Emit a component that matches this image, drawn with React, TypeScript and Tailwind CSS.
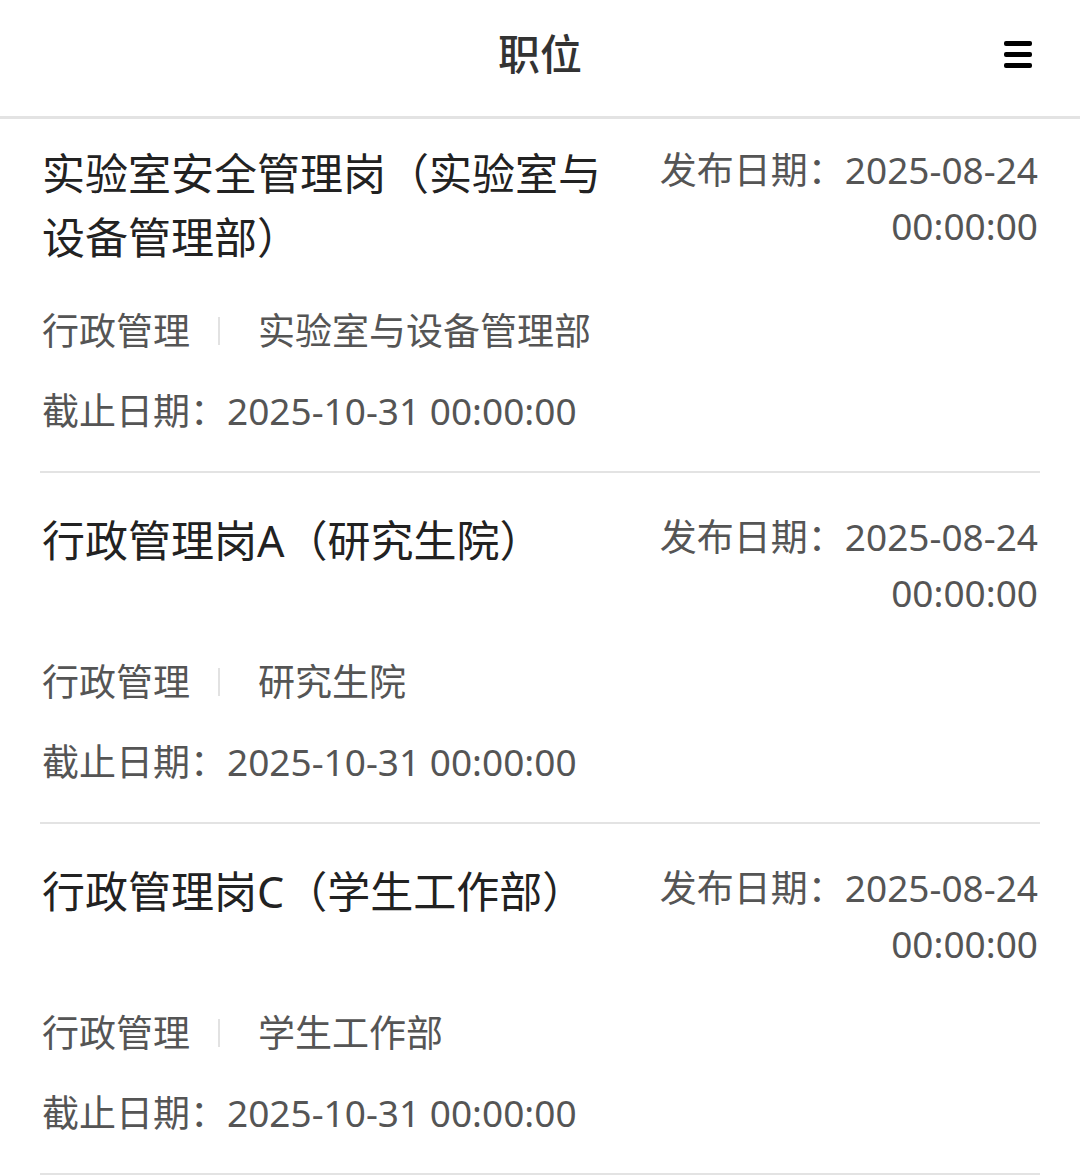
import React from 'react';

interface Job {
  title: string;
  category: string;
  dept: string;
  publishDate: string;
  publishTime: string;
  deadline: string;
}

const jobs: Job[] = [
  {
    title: '实验室安全管理岗（实验室与设备管理部）',
    category: '行政管理',
    dept: '实验室与设备管理部',
    publishDate: '2025-08-24',
    publishTime: '00:00:00',
    deadline: '2025-10-31 00:00:00',
  },
  {
    title: '行政管理岗A（研究生院）',
    category: '行政管理',
    dept: '研究生院',
    publishDate: '2025-08-24',
    publishTime: '00:00:00',
    deadline: '2025-10-31 00:00:00',
  },
  {
    title: '行政管理岗C（学生工作部）',
    category: '行政管理',
    dept: '学生工作部',
    publishDate: '2025-08-24',
    publishTime: '00:00:00',
    deadline: '2025-10-31 00:00:00',
  },
];

function JobCard({ job, first }: { job: Job; first: boolean }) {
  return (
    <div className={first ? 'pt-[23px]' : 'pt-[36px]'}>
      <div className="flex items-start justify-between px-[42px]">
        <p className="w-[570px] text-[43px] leading-[64px] text-[#222]">{job.title}</p>
        <div className="text-right text-[37px] leading-[56px] text-[#555]">
          <p>发布日期：{job.publishDate}</p>
          <p>{job.publishTime}</p>
        </div>
      </div>
      <div className="mt-[36px] flex items-center px-[42px] text-[37px] leading-[50px] text-[#555]">
        <span>{job.category}</span>
        <span className="ml-[28px] mr-[38px] h-[28px] w-[2px] bg-[#e2e2e2]" />
        <span>{job.dept}</span>
      </div>
      <p className="mt-[30px] px-[42px] text-[37px] leading-[50px] text-[#555]">
        截止日期：{job.deadline}
      </p>
      <div className="mx-[40px] mt-[35px] h-[2px] bg-[#e3e3e3]" />
    </div>
  );
}

export default function App() {
  return (
    <div
      className="min-h-[1175px] w-[1080px] bg-white"
      style={{ fontFamily: '"Noto Sans", "Noto Sans CJK SC", sans-serif' }}
    >
      <header className="relative flex h-[119px] items-center justify-center border-b-[3px] border-[#e3e3e3]">
        <h1 className="pb-[8px] text-[42px] font-medium leading-none text-[#333]">职位</h1>
        <div className="absolute right-[48px] top-[41px] flex flex-col gap-[6px]">
          <span className="block h-[5px] w-[28px] rounded-[2px] bg-black" />
          <span className="block h-[5px] w-[28px] rounded-[2px] bg-black" />
          <span className="block h-[5px] w-[28px] rounded-[2px] bg-black" />
        </div>
      </header>
      {jobs.map((job, i) => (
        <JobCard key={job.title} job={job} first={i === 0} />
      ))}
    </div>
  );
}
